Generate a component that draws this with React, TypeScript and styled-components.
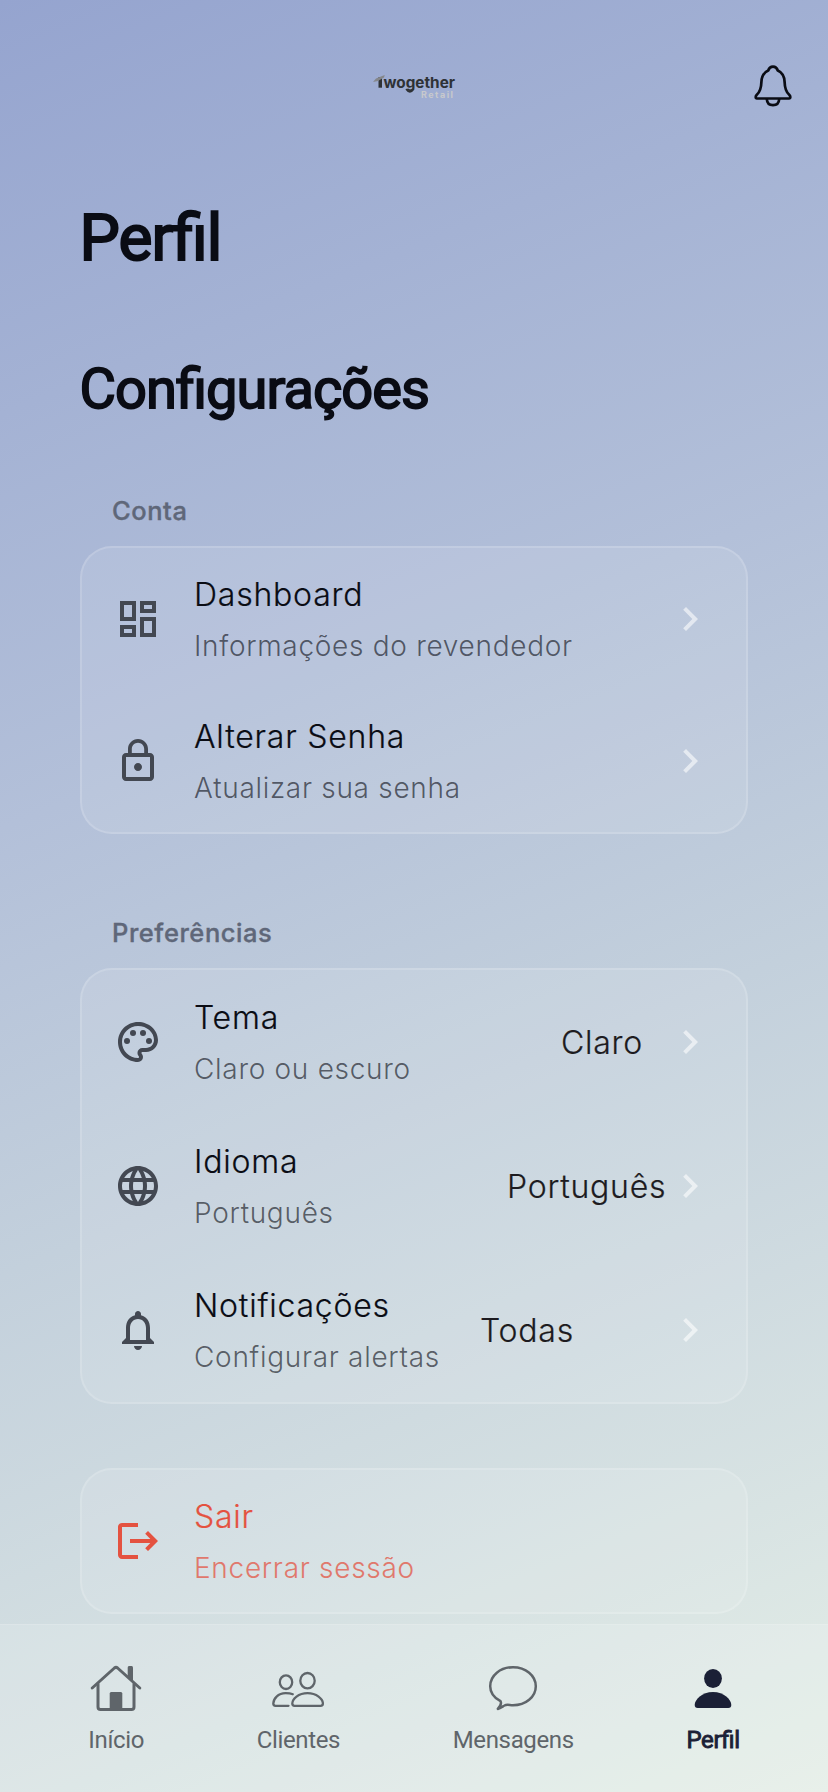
import React from 'react';
import styled, { createGlobalStyle, css } from 'styled-components';
import {
  MdOutlineDashboard,
  MdLockOutline,
  MdOutlinePalette,
  MdOutlineLanguage,
  MdNotificationsNone,
  MdLogout,
  MdChevronRight,
} from 'react-icons/md';

const GlobalStyle = createGlobalStyle`
  *, *::before, *::after { box-sizing: border-box; }
  body { margin: 0; }
`;

const Screen = styled.div`
  width: 828px;
  height: 1792px;
  display: flex;
  flex-direction: column;
  overflow: hidden;
  font-family: Roboto, sans-serif;
  color: #0a0c14;
  background: linear-gradient(158deg, #95a4cf 0%, #b3c0d9 39%, #c3d0dc 60%, #e4eee7 100%);
`;

const Header = styled.header`
  height: 170px;
  flex: none;
  display: grid;
  grid-template-columns: 1fr auto 1fr;
  padding: 65px 36px 0 36px;
`;

const Brand = styled.div`
  grid-column: 2;
  width: 84px;
  margin-top: 6px;
  display: flex;
  flex-direction: column;
`;

const HeaderButton = styled.button`
  grid-column: 3;
  justify-self: end;
  align-self: start;
  padding: 0;
  border: 0;
  background: none;
  color: #0a0c14;
  line-height: 0;
`;

const Content = styled.main`
  flex: 1;
  display: flex;
  flex-direction: column;
  padding: 0 80px;
`;

const Title = styled.h1<{ $size: number; $top: number }>`
  margin: ${(p) => p.$top}px 0 0 -0.5px;
  font-size: ${(p) => p.$size}px;
  line-height: 76px;
  font-weight: 400;
  letter-spacing: -0.95px;
  font-feature-settings: 'liga' 1;
  -webkit-text-stroke: ${(p) => p.$size / 32}px currentColor;
`;

const SectionLabel = styled.h2<{ $top: number }>`
  margin: ${(p) => p.$top}px 0 0;
  padding: 0 32px;
  height: 36px;
  line-height: 36px;
  font-family: Inter, sans-serif;
  font-size: 25.5px;
  font-weight: 500;
  letter-spacing: 0.55px;
  color: #5f6779;
  -webkit-text-stroke: 0.35px currentColor;
`;

const Card = styled.section<{ $top: number }>`
  margin-top: ${(p) => p.$top}px;
  flex: none;
  border: 2px solid rgba(255, 255, 255, 0.15);
  border-radius: 32px;
  background: rgba(255, 255, 255, 0.1);
  font-family: Inter, sans-serif;
  font-weight: 300;
`;

const Row = styled.div<{ $height: number; $danger?: boolean }>`
  height: ${(p) => p.$height}px;
  display: flex;
  align-items: center;
  padding: 0 32px;
  color: ${(p) => (p.$danger ? '#e45240' : '#0a0c14')};
`;

const RowIcon = styled.span<{ $danger?: boolean }>`
  display: flex;
  margin-right: 32px;
  color: ${(p) => (p.$danger ? '#e45240' : '#434852')};
`;

const RowText = styled.div`
  flex: 1;
  display: flex;
  flex-direction: column;
  padding-bottom: 2px;
  white-space: nowrap;
`;

const RowTitle = styled.span`
  font-size: 32px;
  line-height: 48px;
  letter-spacing: 0.78px;
  -webkit-text-stroke: 0.2px currentColor;
`;

const RowSubtitle = styled.span<{ $danger?: boolean }>`
  margin-top: 7px;
  font-size: 28px;
  line-height: 40px;
  letter-spacing: 0.7px;
  color: ${(p) => (p.$danger ? '#e0786c' : 'rgba(10, 12, 20, 0.62)')};
`;

const Value = styled.span<{ $width: number }>`
  width: ${(p) => p.$width}px;
  padding-top: 2px;
  font-size: 32px;
  line-height: 48px;
  letter-spacing: 0.75px;
  color: #1d1b20;
  -webkit-text-stroke: 0.2px currentColor;
`;

const Chevron = styled.span`
  display: flex;
  color: rgba(255, 255, 255, 0.58);
`;

const TabBar = styled.nav`
  height: 168px;
  flex: none;
  display: flex;
  justify-content: space-around;
  padding: 39px 32px 0;
  border-top: 1px solid rgba(255, 255, 255, 0.15);
  background: rgba(255, 255, 255, 0.15);
`;

const Tab = styled.a<{ $active?: boolean }>`
  display: flex;
  flex-direction: column;
  align-items: center;
  gap: 12px;
  font-size: 24px;
  line-height: 32px;
  letter-spacing: -0.35px;
  color: #5f656a;
  ${(p) =>
    p.$active &&
    css`
      color: #1b2036;
      font-feature-settings: 'liga' 1;
      -webkit-text-stroke: 0.9px currentColor;
    `}
`;

const Logo = () => (
  <svg width="84" height="30" viewBox="0 0 84 30" role="img" aria-label="Twogether Retail">
    <path d="M6.500 6H10V16.700H6.500Z" fill="#2e3236" />
    <path d="M1 11 L4 7.500 L12.700 4 L12 6.500 L6 10 Z" fill="#85878b" />
    <text x="11.500" y="16.700" textLength="71.500" lengthAdjust="spacingAndGlyphs" fontFamily="Inter" fontWeight="700" fontSize="15" fill="#2e3236">
      wogether
    </text>
    <path d="M34.200 18 Q37.900 23.500 41.600 18" fill="none" stroke="#2e3236" strokeWidth="2" />
    <text x="49" y="26.500" textLength="32" lengthAdjust="spacing" fontFamily="Inter" fontWeight="700" fontSize="9" fill="#c8c9cc">
      Retail
    </text>
  </svg>
);

const AlertBell = () => (
  <svg width="38" height="42" viewBox="0 0 38 42" fill="none" stroke="currentColor" strokeWidth="2.700" strokeLinejoin="round">
    <path d="M19 1.700C16.500 1.700 15 3 14.200 5.500C9.800 7.500 7.600 11.500 7.400 17C7.200 24 6 27 2.800 29.700C1.400 31 1.200 33.500 3 33.500H35C36.800 33.500 36.600 31 35.200 29.700C32 27 30.800 24 30.600 17C30.400 11.500 28.200 7.500 23.800 5.500C23 3 21.500 1.700 19 1.700Z" />
    <path d="M12.800 34C13 38 15.500 40.200 19 40.200S25 38 25.200 34" />
  </svg>
);

const HomeGlyph = () => (
  <svg width="52" height="48" viewBox="0 0 52 48" fill="none" stroke="currentColor" strokeWidth="3" strokeLinecap="round" strokeLinejoin="round">
    <path d="M2.200 24L24.400 4Q26 2.800 27.600 4L49.800 24" />
    <path d="M8 20V43Q8 45.500 10.500 45.500H41.500Q44 45.500 44 43V20" />
    <path d="M37.700 3.800Q37.700 2 39 2H41.700Q43 2 43 3.800V17L37.700 12.500Z" fill="currentColor" stroke="none" />
    <path d="M19.700 45V29.500Q19.700 28 21.200 28H30.800Q32.300 28 32.300 29.500V45Z" fill="currentColor" stroke="none" />
  </svg>
);

const ClientsGlyph = () => (
  <svg width="52" height="48" viewBox="0 0 52 48" fill="none" stroke="currentColor" strokeWidth="2.300" strokeLinecap="round" strokeLinejoin="round">
    <ellipse cx="14" cy="18.200" rx="6.200" ry="6.800" />
    <ellipse cx="35.500" cy="16.700" rx="7.200" ry="7.700" />
    <path d="M20.800 30.200C18.500 29.300 16 29.200 13.600 29.200C6 29.200 1.300 34.800 1.300 39.600Q1.300 41.800 3.500 41.800H16.500" />
    <path d="M35.500 29.200C26.500 29.200 20.300 35 20.300 39.600Q20.300 41.800 22.500 41.800H48.700Q50.900 41.800 50.900 39.600C50.900 35 44.500 29.200 35.500 29.200Z" />
  </svg>
);

const ChatGlyph = () => (
  <svg width="52" height="48" viewBox="0 0 52 48" fill="none" stroke="currentColor" strokeWidth="2.500" strokeLinejoin="round">
    <path d="M26 3.200C38.700 3.200 48.800 11.500 48.800 22.200S38.700 41.200 26 41.200C22.500 41.200 20 40 17.500 41.500C15 43 13 44.500 10.800 44.900C13.500 42 14.800 39.500 13.500 37.200C7.500 34 3.200 29 3.200 22.200C3.200 11.500 13.300 3.200 26 3.200Z" />
  </svg>
);

const PersonGlyph = () => (
  <svg width="52" height="48" viewBox="0 0 52 48" fill="currentColor">
    <ellipse cx="26" cy="14.500" rx="8.900" ry="9.500" />
    <path d="M26 28C37 28 44.300 35.500 44.300 41Q44.300 44 41.300 44H10.700Q7.700 44 7.700 41C7.700 35.500 15 28 26 28Z" />
  </svg>
);

type ItemProps = {
  icon: React.ReactNode;
  title: string;
  subtitle: string;
  height: number;
  value?: string;
  valueWidth?: number;
  danger?: boolean;
};

const SettingsRow = ({ icon, title, subtitle, height, value, valueWidth = 0, danger }: ItemProps) => (
  <Row $height={height} $danger={danger}>
    <RowIcon $danger={danger}>{icon}</RowIcon>
    <RowText>
      <RowTitle>{title}</RowTitle>
      <RowSubtitle $danger={danger}>{subtitle}</RowSubtitle>
    </RowText>
    {value && <Value $width={valueWidth}>{value}</Value>}
    {!danger && (
      <Chevron>
        <MdChevronRight size={48} />
      </Chevron>
    )}
  </Row>
);

export default function App() {
  return (
    <Screen>
      <GlobalStyle />
      <Header>
        <Brand>
          <Logo />
        </Brand>
        <HeaderButton aria-label="Notificações">
          <AlertBell />
        </HeaderButton>
      </Header>
      <Content>
        <Title $size={64} $top={31}>Perfil</Title>
        <Title $size={56} $top={74}>Configurações</Title>
        <SectionLabel $top={66}>Conta</SectionLabel>
        <Card $top={17}>
          <SettingsRow height={142} icon={<MdOutlineDashboard size={48} />} title="Dashboard" subtitle="Informações do revendedor" />
          <SettingsRow height={142} icon={<MdLockOutline size={48} />} title="Alterar Senha" subtitle="Atualizar sua senha" />
        </Card>
        <SectionLabel $top={81}>Preferências</SectionLabel>
        <Card $top={17}>
          <SettingsRow height={144} icon={<MdOutlinePalette size={48} />} title="Tema" subtitle="Claro ou escuro" value="Claro" valueWidth={105} />
          <SettingsRow height={144} icon={<MdOutlineLanguage size={48} />} title="Idioma" subtitle="Português" value="Português" valueWidth={159} />
          <SettingsRow height={144} icon={<MdNotificationsNone size={48} />} title="Notificações" subtitle="Configurar alertas" value="Todas" valueWidth={186} />
        </Card>
        <Card $top={64}>
          <SettingsRow height={142} icon={<MdLogout size={48} />} title="Sair" subtitle="Encerrar sessão" danger />
        </Card>
      </Content>
      <TabBar>
        <Tab><HomeGlyph />Início</Tab>
        <Tab><ClientsGlyph />Clientes</Tab>
        <Tab><ChatGlyph />Mensagens</Tab>
        <Tab $active><PersonGlyph />Perfil</Tab>
      </TabBar>
    </Screen>
  );
}
